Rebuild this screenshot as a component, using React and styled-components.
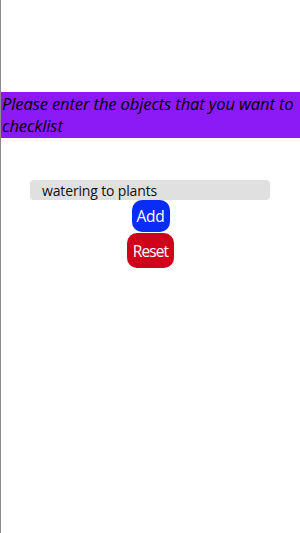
import React from 'react'
import styled, { createGlobalStyle } from 'styled-components'

const GlobalStyle = createGlobalStyle`
  html, body {
    margin: 0;
    padding: 0;
    background: #ffffff;
  }
  body {
    font-family: 'Open Sans', 'Noto Sans', sans-serif;
  }
`

const Page = styled.div`
  min-height: 533px;
  border-left: 1px solid #8c8c8c;
  box-sizing: border-box;
  padding-top: 92px;
`

const Banner = styled.h1`
  margin: 0;
  background: #8c1af7;
  color: #000000;
  font-size: 16.5px;
  font-style: italic;
  font-weight: 400;
  line-height: 22px;
  padding: 1px 0 1px 1px;
  letter-spacing: -0.1px;
`

const Form = styled.div`
  display: flex;
  flex-direction: column;
  align-items: center;
  margin-top: 42px;
`

const Input = styled.input`
  width: 240px;
  height: 20px;
  box-sizing: border-box;
  border: none;
  border-radius: 4px;
  background: #e0e0e0;
  padding: 0 0 0 12px;
  font-family: 'Open Sans', 'Noto Sans', sans-serif;
  font-size: 14px;
  letter-spacing: -0.15px;
  color: #111111;
  outline: none;
  margin-left: -1px;
`

const Button = styled.button`
  border: none;
  border-radius: 10px;
  background: ${(p) => p.color};
  color: #ffffff;
  font-family: 'Open Sans', 'Noto Sans', sans-serif;
  font-size: 15.5px;
  letter-spacing: ${(p) => p.ls}px;
  width: ${(p) => p.w}px;
  height: ${(p) => p.h}px;
  padding: 0;
  margin-top: ${(p) => p.mt}px;
  cursor: pointer;
`

export default function App() {
  const [value, setValue] = React.useState('watering to plants')
  return (
    <>
      <GlobalStyle />
      <Page>
        <Banner>Please enter the objects that you want to checklist</Banner>
        <Form>
          <Input value={value} onChange={(e) => setValue(e.target.value)} />
          <Button color="#0a2cf7" w={38} h={32} mt={0} ls={-0.3}>
            Add
          </Button>
          <Button color="#d0021b" w={47} h={35} mt={1} ls={-0.9}>
            Reset
          </Button>
        </Form>
      </Page>
    </>
  )
}
